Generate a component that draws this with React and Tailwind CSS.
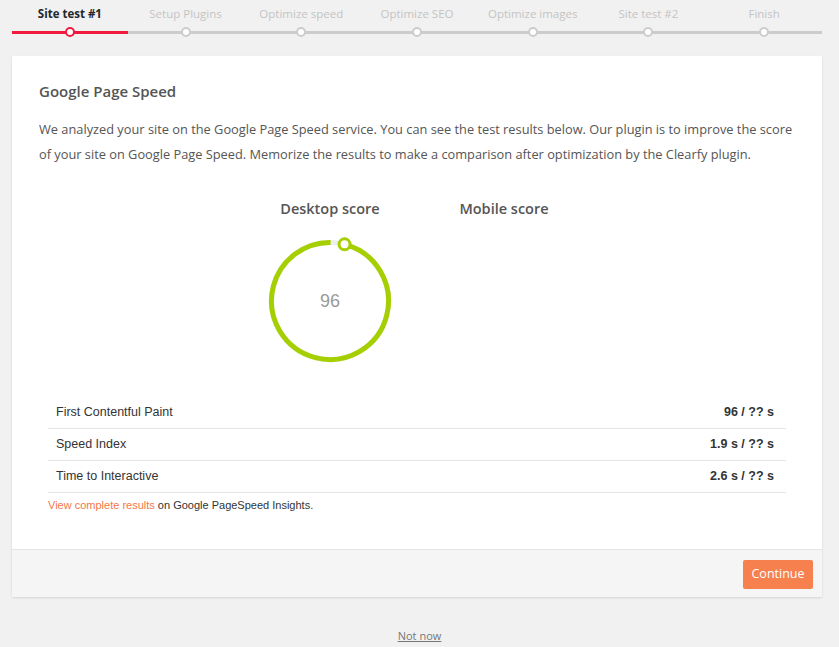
import React from "react";

const steps = [
  "Site test #1",
  "Setup Plugins",
  "Optimize speed",
  "Optimize SEO",
  "Optimize images",
  "Site test #2",
  "Finish",
];

const metrics = [
  { name: "First Contentful Paint", value: "96 / ?? s" },
  { name: "Speed Index", value: "1.9 s / ?? s" },
  { name: "Time to Interactive", value: "2.6 s / ?? s" },
];

const ScoreCircle = ({ score }) => {
  const r = 58.5;
  const c = 2 * Math.PI * r;
  const start = (1 - score / 100) * 360;
  const len = (score / 100) * c;
  const rad = ((start - 90) * Math.PI) / 180;
  const kx = 65 + r * Math.cos(rad);
  const ky = 65 + r * Math.sin(rad);
  return (
    <div className="relative w-[130px] h-[130px]">
      <svg width="130" height="130" viewBox="0 0 130 130">
        <circle cx="65" cy="65" r={r} fill="none" stroke="#eeeeee" strokeWidth="5" />
        <circle
          cx="65"
          cy="65"
          r={r}
          fill="none"
          stroke="#a5cf00"
          strokeWidth="5"
          strokeDasharray={`${len} ${c}`}
          transform={`rotate(${start - 90} 65 65)`}
        />
        <circle cx={kx} cy={ky} r="5.5" fill="#fff" stroke="#a5cf00" strokeWidth="3" />
      </svg>
      <div className="absolute inset-0 flex items-center justify-center text-[18px] text-[#9a9a9a] font-['Liberation_Sans',Arial,sans-serif]">
        {score}
      </div>
    </div>
  );
};

export default function App() {
  return (
    <div className="min-h-screen bg-[#f1f1f1] font-['Open_Sans',sans-serif] text-[#555]">
      {/* steps */}
      <div className="ml-3 w-[810px] grid grid-cols-7 pt-[5px]">
        {steps.map((s, i) => (
          <div key={s} className="flex flex-col items-center">
            <div
              className={
                "text-[11.5px] leading-[18px] whitespace-nowrap " +
                (i === 0 ? "font-bold text-[#23282d]" : "text-[#c4c4c4]")
              }
            >
              {s}
            </div>
            <div className="relative mt-[4px] w-full h-[10px] flex items-center">
              <div className={"w-full h-[3px] " + (i === 0 ? "bg-[#f2193e]" : "bg-[#cccccc]")} />
              <div
                className={
                  "absolute left-1/2 top-1/2 -translate-x-1/2 -translate-y-1/2 w-[10px] h-[10px] rounded-full bg-white border-2 " +
                  (i === 0 ? "border-[#f2193e]" : "border-[#cccccc]")
                }
              />
            </div>
          </div>
        ))}
      </div>

      {/* card */}
      <div className="ml-3 mt-[19px] w-[810px] bg-white shadow-[0_1px_2px_rgba(0,0,0,0.12)]">
        <div className="px-[27px] pt-[25px] pb-[37px]">
          <h2 className="text-[15px] leading-[20px] font-semibold text-[#555]">Google Page Speed</h2>
          <p className="mt-[16px] text-[12.8px] leading-[25px] text-[#555]">
            We analyzed your site on the Google Page Speed service. You can see the test results below. Our plugin is to improve the score
            of your site on Google Page Speed. Memorize the results to make a comparison after optimization by the Clearfy plugin.
          </p>

          <div className="mt-[32px] flex justify-center">
            <div className="w-[174px] flex flex-col items-center">
              <div className="text-[14.5px] leading-[20px] font-semibold text-[#555]">Desktop score</div>
              <div className="mt-[17px]">
                <ScoreCircle score={96} />
              </div>
            </div>
            <div className="w-[174px] flex flex-col items-center">
              <div className="text-[14.5px] leading-[20px] font-semibold text-[#555]">Mobile score</div>
            </div>
          </div>

          <div className="mx-[9px] mt-[31px] font-['Liberation_Sans',Arial,sans-serif] text-[12.5px] text-[#333]">
            {metrics.map((m) => (
              <div
                key={m.name}
                className="flex items-center justify-between h-[32px] pl-[8px] pr-[12px] border-b border-[#e5e5e5]"
              >
                <span>{m.name}</span>
                <span className="font-bold">{m.value}</span>
              </div>
            ))}
            <div className="mt-[5px] text-[11px] leading-[14px] text-[#333]">
              <a href="#" className="text-[#f4774a]">View complete results</a> on Google PageSpeed Insights.
            </div>
          </div>
        </div>

        <div className="h-[48px] bg-[#f5f5f5] border-t border-[#e5e5e5] flex justify-end items-start pt-[10px] pr-[9px]">
          <button className="w-[70px] h-[29px] rounded-[2px] bg-[#f7804f] text-white text-[12.5px]">Continue</button>
        </div>
      </div>

      <div className="mt-[25px] pb-2 text-center">
        <a href="#" className="text-[11px] leading-[14px] text-[#777] underline">Not now</a>
      </div>
    </div>
  );
}
